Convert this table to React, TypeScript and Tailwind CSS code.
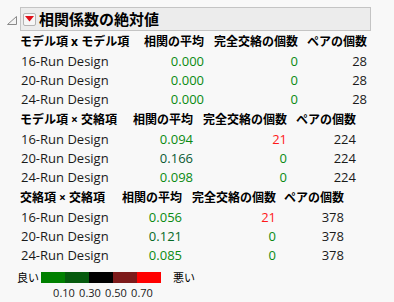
import React from "react";

const FONT = { fontFamily: '"Open Sans", "Noto Sans CJK JP", sans-serif' };

type Row = { name: string; avg: string; avgColor: string; conf: string; confColor: string; pairs: string };

const GREEN = "text-[#0a8a12]";
const RED = "text-[#ff1a1a]";

function Table({
  cols,
  head,
  rows,
}: {
  cols: string;
  head: string;
  rows: Row[];
}) {
  return (
    <div className={`grid ${cols} pl-[20px]`}>
      <div className="h-[21px] flex items-center font-bold text-[12px] text-black whitespace-nowrap">{head}</div>
      <div className="h-[21px] flex items-center justify-end font-bold text-[12px] text-black whitespace-nowrap">相関の平均</div>
      <div className="h-[21px] flex items-center justify-end font-bold text-[12px] text-black whitespace-nowrap">完全交絡の個数</div>
      <div className="h-[21px] flex items-center justify-end font-bold text-[12px] text-black whitespace-nowrap">ペアの個数</div>
      {rows.map((r) => (
        <React.Fragment key={r.name}>
          <div className="h-[19px] flex items-center pl-[1px] text-[13px] text-[#1a1a1a] whitespace-nowrap">{r.name}</div>
          <div className={`h-[19px] flex items-center justify-end text-[13px] ${r.avgColor}`}>{r.avg}</div>
          <div className={`h-[19px] flex items-center justify-end text-[13px] ${r.confColor}`}>{r.conf}</div>
          <div className="h-[19px] flex items-center justify-end text-[13px] text-[#1a1a1a]">{r.pairs}</div>
        </React.Fragment>
      ))}
    </div>
  );
}

export default function App() {
  const t1: Row[] = [
    { name: "16-Run Design", avg: "0.000", avgColor: GREEN, conf: "0", confColor: GREEN, pairs: "28" },
    { name: "20-Run Design", avg: "0.000", avgColor: GREEN, conf: "0", confColor: GREEN, pairs: "28" },
    { name: "24-Run Design", avg: "0.000", avgColor: GREEN, conf: "0", confColor: GREEN, pairs: "28" },
  ];
  const t2: Row[] = [
    { name: "16-Run Design", avg: "0.094", avgColor: GREEN, conf: "21", confColor: RED, pairs: "224" },
    { name: "20-Run Design", avg: "0.166", avgColor: "text-[#0b5a33]", conf: "0", confColor: GREEN, pairs: "224" },
    { name: "24-Run Design", avg: "0.098", avgColor: GREEN, conf: "0", confColor: GREEN, pairs: "224" },
  ];
  const t3: Row[] = [
    { name: "16-Run Design", avg: "0.056", avgColor: GREEN, conf: "21", confColor: RED, pairs: "378" },
    { name: "20-Run Design", avg: "0.121", avgColor: "text-[#066a26]", conf: "0", confColor: GREEN, pairs: "378" },
    { name: "24-Run Design", avg: "0.085", avgColor: GREEN, conf: "0", confColor: GREEN, pairs: "378" },
  ];

  return (
    <div className="w-[394px] h-[302px] bg-[#f8f8f8] overflow-hidden" style={FONT}>
      <div className="flex items-center pt-[7px] pl-[7px]">
        <svg width="10" height="9" viewBox="0 0 10 9" className="mr-[3px] mt-[2px]">
          <path d="M0.5 8.5 L9.5 8.5 L9.5 0.5 Z" fill="#f4f4f4" stroke="#8a8a8a" strokeWidth="1" />
        </svg>
        <div className="w-[351px] h-[24px] border border-[#c4c4c4] bg-[#ececec] flex items-center">
          <div className="ml-[2px] w-[13px] h-[13px] border border-[#b4b4b4] bg-[#f6f6f6] rounded-[2px] flex items-center justify-center">
            <svg width="9" height="6" viewBox="0 0 9 6">
              <path d="M0 0 L9 0 L4.5 5.5 Z" fill="#e0101a" />
            </svg>
          </div>
          <span className="ml-[3px] text-[15px] font-bold text-black leading-none whitespace-nowrap">相関係数の絶対値</span>
        </div>
      </div>

      <Table cols="grid-cols-[124px_60px_94px_69px]" head="モデル項 x モデル項" rows={t1} />
      <Table cols="grid-cols-[113px_60px_94px_69px]" head="モデル項 × 交絡項" rows={t2} />
      <Table cols="grid-cols-[102px_60px_94px_68px]" head="交絡項 × 交絡項" rows={t3} />

      <div className="flex items-center mt-[7px] pl-[17px]">
        <span className="w-[24px] text-[11px] text-black leading-none">良い</span>
        <div className="flex h-[11px]">
          <div className="w-[24px] bg-[#008000]" />
          <div className="w-[24px] bg-[#055a0d]" />
          <div className="w-[24px] bg-black" />
          <div className="w-[24px] bg-[#7d1a1a]" />
          <div className="w-[24px] bg-[#ff0000]" />
        </div>
        <span className="ml-[12px] text-[11px] text-black leading-none">悪い</span>
      </div>
      <div className="flex pl-[51px] mt-[4px] text-[11px] text-[#1a1a1a] leading-none">
        <span className="w-[26px] text-center">0.10</span>
        <span className="w-[26px] text-center">0.30</span>
        <span className="w-[26px] text-center">0.50</span>
        <span className="w-[26px] text-center">0.70</span>
      </div>
    </div>
  );
}
